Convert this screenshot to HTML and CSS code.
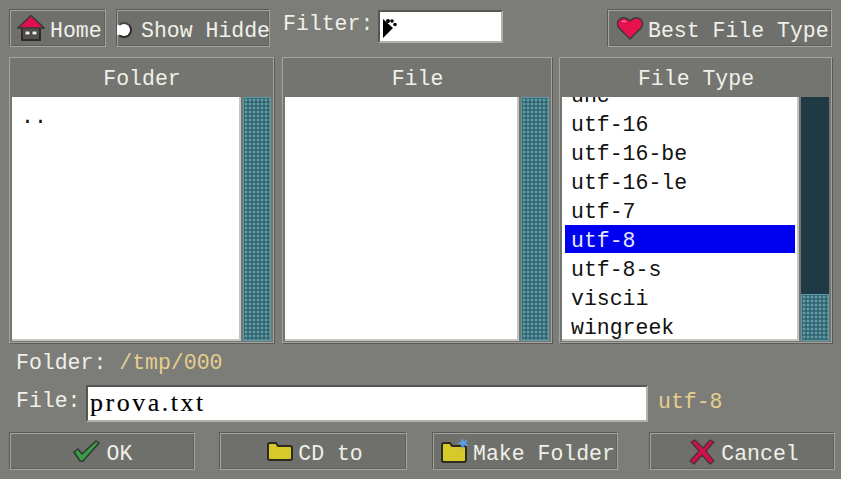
FILE: index.html
```html
<!DOCTYPE html>
<html lang="en">
<head>
<meta charset="utf-8">
<title>File dialog</title>
<link rel="stylesheet" href="styles.css">
</head>
<body>
<main class="dialog">
  <div class="toolbar">
    <button class="btn btn-home"><svg class="icon" width="28" height="28" viewBox="0 0 28 28"><path d="M5 12h18v14H5z" fill="#55504f" stroke="#2b2b2b" stroke-width="2"/><path d="M0.800 14 14 1.500 27.200 14z" fill="#e0104f" stroke="#2f3a3a" stroke-width="1.500"/><path d="M8 17h5v4H8zM15 17h5v4h-5z" fill="#efefea" stroke="#444"/></svg><span class="label">Home</span></button>
    <button class="btn btn-hidden"><span class="radio"></span><span class="label">Show Hidden</span></button>
    <label class="field-label filter-label">Filter:</label>
    <div class="input filter-input"><svg width="14" height="20" viewBox="0 0 14 20"><path d="M0 1 10 10 0 20z" fill="#000"/><circle cx="5" cy="3" r="2"/><circle cx="9" cy="3" r="1.800"/><circle cx="12" cy="6.500" r="1.800"/></svg></div>
    <button class="btn btn-best"><svg class="icon" width="28" height="26" viewBox="0 0 28 26"><path d="M14 24 3 13C-1 7 4 2 9 3c2 .4 4 2 5 3 1-1 3-2.600 5-3 5-1 10 4 6 10z" fill="#e8104f" stroke="#3a3a3a" stroke-width="1.500"/><path d="M6 7c1-1 3-1 4 0" stroke="#ff8aa8" stroke-width="1.500" fill="none"/></svg><span class="label">Best File Type</span></button>
  </div>

  <div class="panels">
    <section class="panel panel-folder">
      <h2 class="panel-title">Folder</h2>
      <div class="panel-body">
        <ul class="list list-top"><li>..</li></ul>
        <div class="scroll"><div class="thumb thumb-full"></div></div>
      </div>
    </section>
    <section class="panel panel-file">
      <h2 class="panel-title">File</h2>
      <div class="panel-body">
        <ul class="list"></ul>
        <div class="scroll"><div class="thumb thumb-full"></div></div>
      </div>
    </section>
    <section class="panel panel-type">
      <h2 class="panel-title">File Type</h2>
      <div class="panel-body">
        <ul class="list list-bottom">
          <li>uhc</li><li>utf-16</li><li>utf-16-be</li><li>utf-16-le</li><li>utf-7</li>
          <li class="selected">utf-8</li><li>utf-8-s</li><li>viscii</li><li>wingreek</li>
        </ul>
        <div class="scroll"><div class="thumb thumb-small"></div></div>
      </div>
    </section>
  </div>

  <div class="folder-line"><span class="field-label">Folder:</span> <span class="value">/tmp/000</span></div>

  <div class="file-line">
    <span class="field-label">File:</span>
    <div class="input file-input">prova.txt</div>
    <span class="value file-encoding">utf-8</span>
  </div>

  <div class="actions">
    <button class="btn btn-ok"><svg class="icon" width="28" height="24" viewBox="0 0 28 24"><path d="M2 13l4-3 4 5L24 2l3 2L11 22H8z" fill="#3f9a4a" stroke="#2a3a2e" stroke-width="1.500" stroke-linejoin="round"/></svg><span class="label">OK</span></button>
    <button class="btn btn-cd"><svg class="icon" width="26" height="20" viewBox="0 0 26 20"><path d="M1 4q0-2 2-2h6l2 3h12q2 0 2 2v10q0 2-2 2H3q-2 0-2-2z" fill="#d8c92a" stroke="#2b2b20" stroke-width="2"/></svg><span class="label">CD to</span></button>
    <button class="btn btn-make"><svg class="icon" width="30" height="26" viewBox="0 0 30 26"><path d="M1 7q0-2 2-2h6l2 3h12q2 0 2 2v12q0 2-2 2H3q-2 0-2-2z" fill="#d8c92a" stroke="#2b2b20" stroke-width="2"/><path d="M21 0l2 3 4-2-2 4 3 3-5-.5-2 4-1-5-4-1 4-2z" fill="#5b9be0"/></svg><span class="label">Make Folder</span></button>
    <button class="btn btn-cancel"><svg class="icon" width="27" height="27" viewBox="0 0 27 27"><path d="M2 4l4-2 8 8 7-8 4 2-8 9 8 10-4 3-8-9-8 9-4-3 9-10z" fill="#d0104a" stroke="#4a3038" stroke-width="1.200" stroke-linejoin="round"/></svg><span class="label">Cancel</span></button>
  </div>
</main>
</body>
</html>
```

FILE: styles.css
```css
* { box-sizing: border-box; }
html, body { margin: 0; padding: 0; }
body {
  width: 841px;
  height: 479px;
  overflow: hidden;
  background: #7c7d78;
  color: #f0f0e8;
  font-family: "Liberation Mono", "DejaVu Sans Mono", monospace;
  font-size: 21.500px;
}
.dialog {
  display: flex;
  flex-direction: column;
  padding: 9px 6px 0 9px;
  height: 479px;
}
.toolbar {
  display: flex;
  align-items: center;
  height: 38px;
}
.btn {
  display: flex;
  align-items: center;
  justify-content: center;
  height: 38px;
  padding: 0;
  background: #6f706c;
  color: #f0f0e8;
  font: inherit;
  border: 1px solid;
  border-color: #5a5b57 #a3a49f #a3a49f #5a5b57;
  box-shadow: inset 1px 1px 0 #a3a49f, inset -1px -1px 0 #5f605c;
  white-space: nowrap;
  overflow: hidden;
}
.label { flex: none; margin-top: 5px; }
.icon { flex: none; }
.btn-home { width: 97px; justify-content: flex-start; padding-left: 7px; gap: 5px; }
.btn-hidden { width: 154px; margin-left: 10px; justify-content: flex-start; }
.radio {
  flex: none;
  width: 16px;
  height: 16px;
  margin-left: -1px;
  margin-right: 9px;
  margin-top: 3px;
  border-radius: 50%;
  background: #fff;
  border: 2px solid #2e2e2e;
  border-left-color: #fff;
  border-top-color: #444;
}
.filter-label { margin-left: 13px; width: 95px; margin-top: -8px; }
.filter-input { width: 125px; height: 33px; padding: 6px 0 0 3px; margin-top: -4px; }
.btn-best { width: 225px; margin-left: auto; margin-right: 3px; justify-content: flex-start; padding-left: 8px; gap: 4px; }
.input {
  background: #fff;
  color: #000;
  border: 2px solid;
  border-color: #565753 #b0b1ac #b0b1ac #565753;
}
.panels {
  display: flex;
  height: 287px;
  margin-top: 10px;
  gap: 7px;
}
.panel {
  display: flex;
  flex-direction: column;
  background: #747571;
  border: 1px solid;
  border-color: #a3a49f #5a5b57 #5a5b57 #a3a49f;
  box-shadow: inset -1px -1px 0 #a3a49f;
}
.panel-folder { width: 266px; }
.panel-file { width: 271px; }
.panel-type { width: 274px; margin-left: -1px; }
.panel-title {
  flex: none;
  height: 39px;
  margin: 0;
  display: flex;
  align-items: center;
  justify-content: center;
  padding-top: 2px;
  font: inherit;
  font-weight: normal;
}
.panel-body {
  flex: 1;
  min-height: 0;
  display: flex;
  gap: 2px;
  padding: 0 3px 2px 2px;
}
.list {
  flex: 1;
  min-width: 0;
  margin: 0;
  padding: 0 2px 0 3px;
  list-style: none;
  background: #fff;
  color: #111;
  border: solid #c4c5c0;
  border-width: 0 2px 2px 0;
  overflow: hidden;
  display: flex;
  flex-direction: column;
}
.list-bottom { justify-content: flex-end; }
.list-top { padding-top: 4px; }
.list li {
  flex: none;
  height: 29px;
  padding: 2px 0 0 6px;
  line-height: 29px;
  overflow: visible;
}
.list li:last-child { margin-bottom: -2px; }
.list .selected {
  background: #0000f0;
  color: #e8e8ff;
  height: 28px;
  margin-bottom: 1px;
}
.scroll {
  flex: none;
  width: 28px;
  background: #1f3a45;
  display: flex;
  flex-direction: column;
  justify-content: flex-end;
}
.thumb {
  background-color: #3c7683;
  background-image:
    radial-gradient(circle, #6a98a2 0.8px, transparent 1.200px),
    radial-gradient(circle, #2f6370 0.8px, transparent 1.200px);
  background-size: 4px 4px;
  background-position: 0 0, 2px 2px;
  border: 1px solid #5f99a6;
}
.thumb-full { height: 100%; }
.thumb-small { height: 47px; }
.folder-line {
  height: 41px;
  padding: 7px 0 0 7px;
  white-space: pre;
}
.value { color: #e6cf8e; }
.file-line {
  display: flex;
  align-items: center;
  height: 37px;
  margin-top: 0;
}
.file-line .field-label { width: 77px; padding-left: 7px; margin-top: -5px; }
.file-encoding { margin-top: -3px; }
.file-input {
  width: 562px;
  height: 37px;
  margin-right: 10px;
  padding: 1px 0 0 2px;
  font-family: "Liberation Serif", serif;
  font-size: 26px;
  letter-spacing: 2.500px;
  line-height: 30px;
  -webkit-text-stroke: 0.15px #000;
}
.actions {
  display: flex;
  margin-top: 10px;
}
.btn-ok { width: 186px; gap: 7px; }
.btn-cd { width: 188px; margin-left: 24px; padding-left: 4px; gap: 5px; }
.btn-make { width: 186px; margin-left: 25px; justify-content: flex-start; padding-left: 8px; gap: 2px; }
.btn-cancel { width: 186px; margin-left: 31px; padding-left: 4px; gap: 5px; }
```
